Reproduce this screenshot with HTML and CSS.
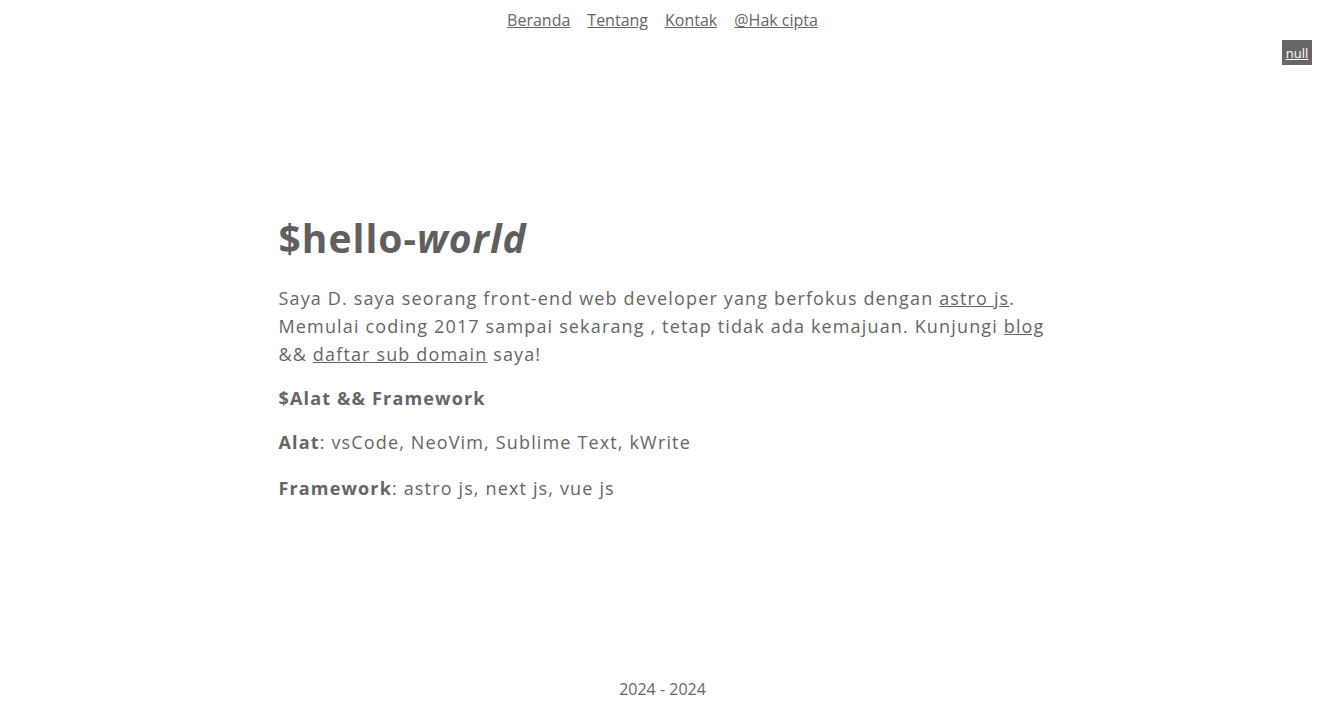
FILE: index.html
```html
<!DOCTYPE html>
<html lang="id">
<head>
<meta charset="utf-8">
<title>hello-world</title>
<link rel="stylesheet" href="styles.css">
</head>
<body>
<div class="page">
  <nav class="nav">
    <a href="#">Beranda</a>
    <a href="#">Tentang</a>
    <a href="#">Kontak</a>
    <a href="#">@Hak cipta</a>
  </nav>
  <button class="toggle"><a href="#">null</a></button>
  <main class="main">
    <div class="content">
      <h1 class="title">$hello-<em>world</em></h1>
      <p class="text">Saya D. saya seorang front-end web developer yang berfokus dengan <a href="#">astro js</a>. Memulai coding 2017 sampai sekarang , tetap tidak ada kemajuan. Kunjungi <a href="#">blog</a> &amp;&amp; <a href="#">daftar sub domain</a> saya!</p>
      <h2 class="sub">$Alat &amp;&amp; Framework</h2>
      <p class="text tools"><strong>Alat</strong>: vsCode, NeoVim, Sublime Text, kWrite</p>
      <p class="text"><strong>Framework</strong>: astro js, next js, vue js</p>
    </div>
  </main>
  <footer class="footer">2024 - 2024</footer>
</div>
</body>
</html>
```
FILE: styles.css
```css
html, body {
  margin: 0;
  padding: 0;
  background: #fff;
}
body {
  font-family: "Open Sans", "Noto Sans", sans-serif;
  color: #666;
}
.page {
  position: relative;
  min-height: 100vh;
  display: flex;
  flex-direction: column;
}
.nav {
  display: flex;
  justify-content: center;
  gap: 17px;
  padding-top: 8px;
  font-size: 16px;
  line-height: 24px;
}
.nav a {
  color: #666;
}
.toggle {
  position: absolute;
  top: 40px;
  right: 13px;
  width: 30px;
  height: 25px;
  padding: 0;
  border: none;
  background: #666;
  font-family: "Open Sans", sans-serif;
  font-size: 13px;
}
.toggle a {
  color: #fff;
}
.main {
  flex: 1;
  display: flex;
  align-items: center;
  justify-content: center;
  padding-top: 20px;
}
.content {
  width: 768px;
}
.title {
  margin: 0 0 18px;
  font-size: 39px;
  font-weight: 700;
  line-height: 1.4;
  letter-spacing: 1px;
  color: #5f5f5f;
}
.title em {
  font-style: italic;
}
.text {
  margin: 0 0 16px;
  font-size: 18px;
  line-height: 28px;
  letter-spacing: 1.15px;
}
.text.tools {
  margin-bottom: 18px;
}
.text a {
  color: #666;
}
.sub {
  margin: 0 0 16px;
  font-size: 18px;
  line-height: 28px;
  font-weight: 700;
  letter-spacing: 1.15px;
}
.footer {
  text-align: center;
  font-size: 16px;
  line-height: 24px;
  padding-bottom: 2px;
}
```
